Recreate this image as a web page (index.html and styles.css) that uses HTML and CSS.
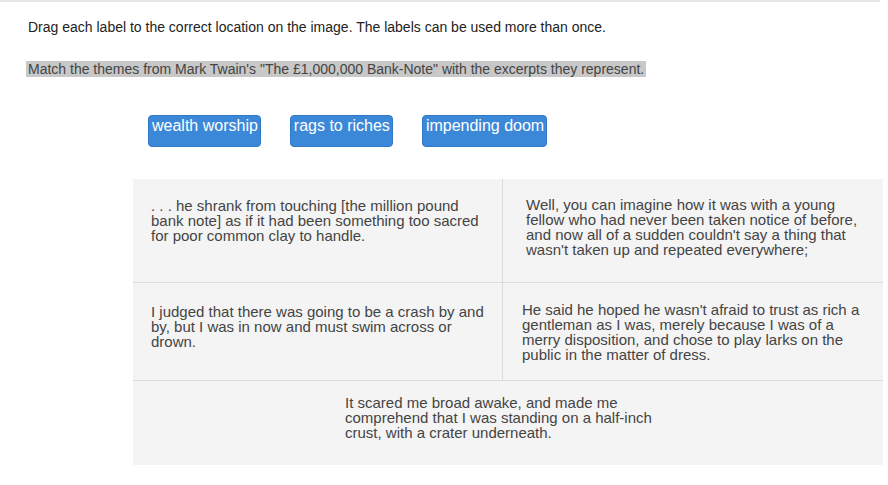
FILE: index.html
```html
<!DOCTYPE html>
<html>
<head>
<meta charset="utf-8">
<link rel="stylesheet" href="styles.css">
</head>
<body>
<div class="page">
  <p class="instr">Drag each label to the correct location on the image. The labels can be used more than once.</p>
  <p class="prompt"><span class="hl">Match the themes from Mark Twain's "The £1,000,000 Bank-Note" with the excerpts they represent.</span></p>
  <div class="labels">
    <div class="label">wealth worship</div>
    <div class="label">rags to riches</div>
    <div class="label">impending doom</div>
  </div>
  <div class="panel">
    <div class="row row1">
      <div class="cell c1"><p class="ex">. . . he shrank from touching [the million pound bank note] as if it had been something too sacred for poor common clay to handle.</p></div>
      <div class="cell c2"><p class="ex">Well, you can imagine how it was with a young fellow who had never been taken notice of before, and now all of a sudden couldn't say a thing that wasn't taken up and repeated everywhere;</p></div>
    </div>
    <div class="row row2">
      <div class="cell c3"><p class="ex">I judged that there was going to be a crash by and by, but I was in now and must swim across or drown.</p></div>
      <div class="cell c4"><p class="ex">He said he hoped he wasn't afraid to trust as rich a gentleman as I was, merely because I was of a merry disposition, and chose to play larks on the public in the matter of dress.</p></div>
    </div>
    <div class="row row3">
      <div class="cell c5"><p class="ex">It scared me broad awake, and made me comprehend that I was standing on a half-inch crust, with a crater underneath.</p></div>
    </div>
  </div>
</div>
</body>
</html>
```

FILE: styles.css
```css
html, body {
  margin: 0;
  padding: 0;
  background: #ffffff;
}
body {
  font-family: "Liberation Sans", Arial, sans-serif;
}
.page {
  border-top: 2px solid #e6e6e6;
  width: 880px;
  height: 483px;
}
.instr {
  margin: 17px 0 0 28px;
  font-size: 14px;
  line-height: 16px;
  color: #222222;
}
.prompt {
  margin: 26px 0 0 26px;
  font-size: 14px;
  line-height: 16px;
  color: #444444;
}
.hl {
  background: #c8c8c8;
  padding: 0 2px;
}
.labels {
  display: flex;
  margin: 38px 0 0 148px;
  gap: 29px;
}
.label {
  height: 32px;
  box-sizing: border-box;
  padding: 1px 2px 0 3px;
  background: #3b88d8;
  border: 1px solid #3178c6;
  border-radius: 4px;
  color: #ffffff;
  font-size: 16px;
  line-height: 18px;
}
.panel {
  margin: 32px 0 0 133px;
  width: 750px;
  background: #f4f4f4;
}
.row {
  display: flex;
  border-bottom: 1px solid #dcdcdc;
}
.row1 { height: 103px; }
.row2 { height: 97px; }
.row3 { height: 84px; border-bottom: none; }
.cell {
  flex: 1;
  box-sizing: border-box;
}
.c1, .c3 {
  flex: 0 0 370px;
  border-right: 1px solid #dcdcdc;
}
.ex {
  margin: 0;
  font-size: 15px;
  line-height: 15px;
  color: #444444;
  max-width: 341px;
}
.c1 { padding: 19px 0 0 18px; }
.c2 { padding: 18px 0 0 23px; }
.c3 { padding: 21px 0 0 18px; }
.c4 { padding: 19px 0 0 19px; }
.c5 { padding: 14px 0 0 212px; }
```
